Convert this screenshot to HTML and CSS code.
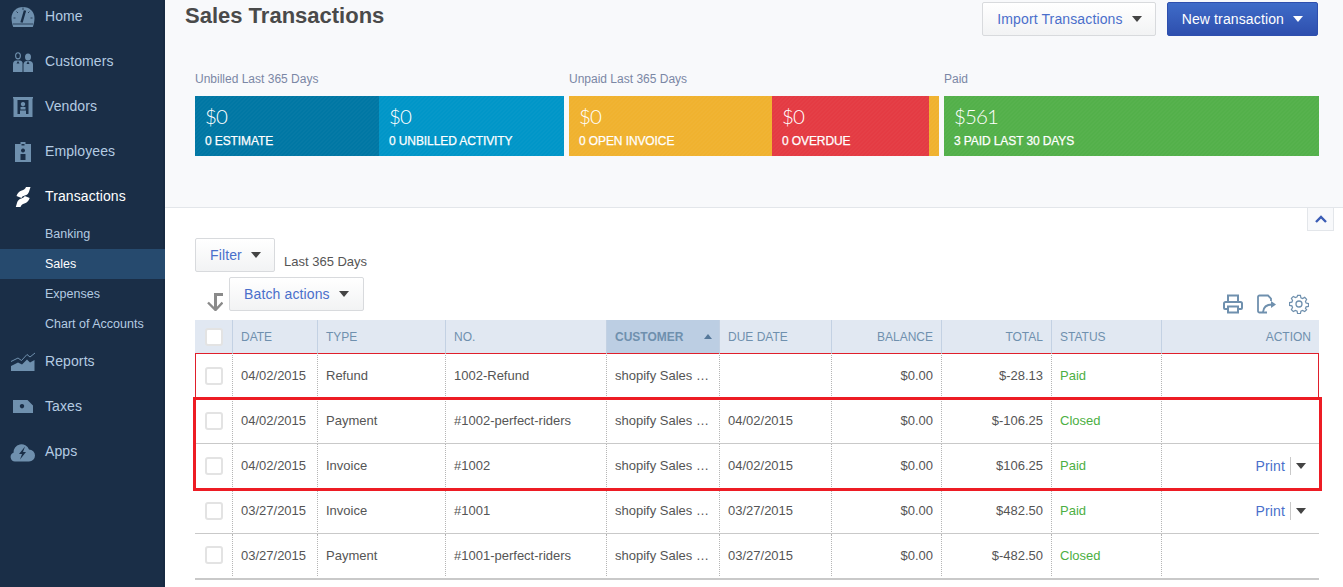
FILE: index.html
```html
<!DOCTYPE html>
<html lang="en">
<head>
<meta charset="utf-8">
<title>Sales Transactions</title>
<link rel="stylesheet" href="styles.css">
</head>
<body>
<div class="app">
  <nav class="side">
    <a class="nav"><svg class="ico" viewBox="0 0 24 20"><path d="M12 0C5.400 0 .5 4.800.5 11c0 3.200.7 6.200 1.700 9h19.600c1-2.800 1.700-5.800 1.700-9C23.500 4.800 18.600 0 12 0z" fill="#6f90ae"/><path d="M14 3.500l-3.500 12" stroke="#1a2e47" stroke-width="2.400"/><path d="M2.500 11h2M19.500 11h2M5.500 4.500L7 6M18.500 4.500L17 6M12 .5v2.500M2 17h20" stroke="#1a2e47" stroke-width=".8"/></svg><span>Home</span></a>
    <a class="nav"><svg class="ico" viewBox="0 0 24 20"><ellipse cx="7" cy="3.800" rx="2.400" ry="3.100" fill="none" stroke="#6f90ae" stroke-width="1.100"/><ellipse cx="17" cy="5" rx="3" ry="3.500" fill="#6f90ae"/><path d="M2 20v-8c0-2 1.500-3.500 3-3.500h4c1.200 0 2 .8 2.500 2V20zM12.500 20v-8c.5-2 1.500-3 3-3h3c2 0 3.500 1.500 3.500 3.500V20z" fill="#6f90ae"/><path d="M7 9l-1.500 2.500h3zM17 9l-1.500 3h3z" fill="#1a2e47"/></svg><span>Customers</span></a>
    <a class="nav"><svg class="ico" viewBox="0 0 24 20"><path fill-rule="evenodd" d="M2 0h20v1.500h-.5V20h-19V1.500H2zM6.500 3v14h2.500v-3.500h6V17h2.500V3zM12 5a2.200 2.200 0 1 0 .01 0zM9.500 10h5v2.500h-5z" fill="#6f90ae"/></svg><span>Vendors</span></a>
    <a class="nav"><svg class="ico" viewBox="0 0 24 20"><path fill-rule="evenodd" d="M4 2h5.500V0h5v2H20v18H4zM10.500 2v1.500h3V2zM12 6.500a2 2 0 1 0 .01 0zM9.500 12v6h5v-6z" fill="#6f90ae"/></svg><span>Employees</span></a>
    <a class="nav on"><svg class="ico" viewBox="0 0 24 20"><path d="M15 0h4.500L18 4.800c-.6 2-2 3.200-4.200 3.800-1.600.5-2.700 1-3.300 2.400L5.500 9C6.500 6 8.200 4.400 10.800 3.500 12.800 2.800 14.400 2 15 0zM9.500 20H4.800l1.400-4.800c.6-2 2-3.200 4.200-3.800 1.600-.5 2.700-1 3.300-2.400l5 2c-1 3-2.700 4.600-5.300 5.500-2 .7-3.300 1.500-3.900 3.500z" fill="#fff"/></svg><span>Transactions</span></a>
    <a class="sub">Banking</a>
    <a class="sub cur">Sales</a>
    <a class="sub">Expenses</a>
    <a class="sub">Chart of Accounts</a>
    <a class="nav"><svg class="ico" viewBox="0 0 24 20"><path d="M0 9.500l7-3.500 3.500 2.500 5.500-6 3 2.500 5-4" fill="none" stroke="#6f90ae" stroke-width="1"/><path d="M0 14l7-3.500 4 2 5-5 3 3 4.500-2.500V19H0z" fill="#6f90ae"/></svg><span>Reports</span></a>
    <a class="nav"><svg class="ico" viewBox="0 0 24 20"><path fill-rule="evenodd" d="M2 3h14.500L22 8.500V16H2zM11 7a2.200 2.200 0 1 0 .01 0z" fill="#6f90ae"/></svg><span>Taxes</span></a>
    <a class="nav"><svg class="ico big" viewBox="0 0 24 20"><path fill-rule="evenodd" d="M4.500 19.500A4.500 4.500 0 0 1 3 10.800 8 8 0 0 1 18.500 7.500a6 6 0 0 1 0 12zM14.500 4.500L8.500 12h3l-2 5.500 6-7.500h-3z" fill="#6f90ae"/></svg><span>Apps</span></a>
  </nav>
  <main class="main">
    <section class="top">
      <header class="head">
        <h1>Sales Transactions</h1>
        <div class="acts">
          <button class="btn imp">Import Transactions<i class="caret"></i></button>
          <button class="btn pri">New transaction<i class="caret w"></i></button>
        </div>
      </header>
      <div class="money">
        <div class="grp g1">
          <div class="lbl">Unbilled Last 365 Days</div>
          <div class="bars">
            <div class="bar teal" style="width:184px"><b>$0</b><span>0 ESTIMATE</span></div>
            <div class="bar blue" style="width:185px"><b>$0</b><span>0 UNBILLED ACTIVITY</span></div>
          </div>
        </div>
        <div class="grp g2">
          <div class="lbl">Unpaid Last 365 Days</div>
          <div class="bars">
            <div class="bar amber" style="width:203px"><b>$0</b><span>0 OPEN INVOICE</span></div>
            <div class="bar red" style="width:157px"><b>$0</b><span>0 OVERDUE</span></div>
            <div class="bar amber sliver" style="width:10px"></div>
          </div>
        </div>
        <div class="grp g3">
          <div class="lbl">Paid</div>
          <div class="bars">
            <div class="bar green" style="width:375px"><b>$561</b><span>3 PAID LAST 30 DAYS</span></div>
          </div>
        </div>
      </div>
    </section>
    <section class="list">
      <button class="collapse"><svg viewBox="0 0 12 8" width="12" height="8"><path d="M1 7l5-5 5 5" fill="none" stroke="#3b5cb5" stroke-width="2.400"/></svg></button>
      <div class="filter">
        <button class="btn sm">Filter<i class="caret"></i></button>
        <span class="range">Last 365 Days</span>
      </div>
      <div class="batch">
        <svg class="turn" viewBox="0 0 16 18" width="16" height="18"><path d="M16 1.500H8.500V16" fill="none" stroke="#8a8a8a" stroke-width="3"/><path d="M1 9.500l7.500 7.500 7-7.500" fill="none" stroke="#8a8a8a" stroke-width="2.400"/></svg>
        <button class="btn sm">Batch actions<i class="caret"></i></button>
        <div class="tools">
          <svg viewBox="0 0 20 20" width="20" height="20"><path d="M5 7.500V1.500h10v6M4.500 15H2a1 1 0 0 1-1-1V9.500A1.500 1.500 0 0 1 2.500 8h15A1.500 1.500 0 0 1 19 9.500V14a1 1 0 0 1-1 1h-2.500M5 12.500h10v6H5z" fill="none" stroke="#6f90ae" stroke-width="2"/></svg>
          <svg viewBox="0 0 20 20" width="20" height="20"><path d="M11 18.500H3.500A1.500 1.500 0 0 1 2 17V3a1.500 1.500 0 0 1 1.500-1.500H12l3 3V7" fill="none" stroke="#6f90ae" stroke-width="1.800"/><path d="M7 18c.5-5 4-7.500 9-7.500" fill="none" stroke="#6f90ae" stroke-width="1.800"/><path d="M15 7l5 3.500-5 3.500z" fill="#6f90ae"/></svg>
          <svg viewBox="0 0 20 20" width="20" height="20"><circle cx="10" cy="10" r="3" fill="none" stroke="#6f90ae" stroke-width="1.300"/><path d="M8.500 1h3l.5 2.500 1.700.7L16 3l2 2-1.200 2.300.7 1.700 2.500.5v3l-2.500.5-.7 1.700L18 16l-2 2-2.300-1.200-1.700.7-.5 2.500h-3L8 17.500l-1.700-.7L4 18l-2-2 1.200-2.300-.7-1.700L0 11.500v-3L2.500 8l.7-1.700L2 4l2-2 2.300 1.200L8 2.500z" transform="translate(.5 .5) scale(.95)" fill="none" stroke="#6f90ae" stroke-width="1.300"/></svg>
        </div>
      </div>
      <div class="table">
        <div class="row th">
          <div class="c c0"><i class="box"></i></div><div class="c c1">DATE</div><div class="c c2">TYPE</div><div class="c c3">NO.</div><div class="c c4 sort">CUSTOMER<i class="up"></i></div><div class="c c5">DUE DATE</div><div class="c c6 r">BALANCE</div><div class="c c7 r">TOTAL</div><div class="c c8">STATUS</div><div class="c c9 r">ACTION</div>
        </div>
        <div class="row first">
          <div class="c c0"><i class="box"></i></div><div class="c c1">04/02/2015</div><div class="c c2">Refund</div><div class="c c3">1002-Refund</div><div class="c c4">shopify Sales …</div><div class="c c5"></div><div class="c c6 r">$0.00</div><div class="c c7 r">$-28.13</div><div class="c c8 ok">Paid</div><div class="c c9 r"></div>
        </div>
        <div class="row">
          <div class="c c0"><i class="box"></i></div><div class="c c1">04/02/2015</div><div class="c c2">Payment</div><div class="c c3">#1002-perfect-riders</div><div class="c c4">shopify Sales …</div><div class="c c5">04/02/2015</div><div class="c c6 r">$0.00</div><div class="c c7 r">$-106.25</div><div class="c c8 ok">Closed</div><div class="c c9 r"></div>
        </div>
        <div class="row">
          <div class="c c0"><i class="box"></i></div><div class="c c1">04/02/2015</div><div class="c c2">Invoice</div><div class="c c3">#1002</div><div class="c c4">shopify Sales …</div><div class="c c5">04/02/2015</div><div class="c c6 r">$0.00</div><div class="c c7 r">$106.25</div><div class="c c8 ok">Paid</div><div class="c c9 r act"><a>Print</a><i class="caret"></i></div>
        </div>
        <div class="row">
          <div class="c c0"><i class="box"></i></div><div class="c c1">03/27/2015</div><div class="c c2">Invoice</div><div class="c c3">#1001</div><div class="c c4">shopify Sales …</div><div class="c c5">03/27/2015</div><div class="c c6 r">$0.00</div><div class="c c7 r">$482.50</div><div class="c c8 ok">Paid</div><div class="c c9 r act"><a>Print</a><i class="caret"></i></div>
        </div>
        <div class="row last">
          <div class="c c0"><i class="box"></i></div><div class="c c1">03/27/2015</div><div class="c c2">Payment</div><div class="c c3">#1001-perfect-riders</div><div class="c c4">shopify Sales …</div><div class="c c5">03/27/2015</div><div class="c c6 r">$0.00</div><div class="c c7 r">$-482.50</div><div class="c c8 ok">Closed</div><div class="c c9 r"></div>
        </div>
        <div class="mark"></div>
      </div>
    </section>
  </main>
</div>
</body>
</html>
```
FILE: styles.css
```css
html, body { margin: 0; padding: 0; height: 100%; overflow: hidden; }
body { font-family: "Liberation Sans", Arial, sans-serif; font-size: 13px; color: #555; background: #fff; }
button { font-family: inherit; cursor: pointer; }
.app { display: flex; height: 587px; overflow: hidden; }

.side { flex: 0 0 165px; width: 165px; background: #1a2e47; box-shadow: inset -2px 0 0 #172a42; }
.nav { display: flex; align-items: center; height: 45px; color: #b4cbe2; font-size: 14px; letter-spacing: .1px; }
.nav:first-child { margin-top: -6px; }
.nav span { margin-bottom: 2px; }
.nav .ico { flex: 0 0 24px; width: 24px; height: 20px; margin: 0 10px 0 11px; overflow: visible; }
.nav .ico.big { width: 27px; flex-basis: 27px; margin: 0 9px 0 9px; }
.nav.on { color: #fff; }
.sub { display: block; height: 30px; line-height: 30px; padding-left: 45px; color: #b4cbe2; font-size: 12.500px; }
.sub.cur { background: #264a6e; color: #fff; position: relative; }

.main { flex: 1; min-width: 0; }
.top { height: 207px; background: #f8f9fb; border-bottom: 1px solid #e3e6ea; padding: 0 25px 0 30px; }
.head { display: flex; justify-content: space-between; height: 72px; margin-left: -10px; }
h1 { margin: 2px 0 0; font-size: 22px; font-weight: 700; line-height: 28px; color: #4a4a4a; }
.acts { display: flex; gap: 11px; margin-top: 2px; height: 34px; }
.btn { height: 34px; padding: 0 14px; border: 1px solid #d8dadd; border-radius: 2px; background: linear-gradient(#fff, #f2f3f4); color: #4a6fcb; font-size: 14px; letter-spacing: .13px; display: inline-flex; align-items: center; white-space: nowrap; }
.btn.imp { padding-right: 13px; }
.btn.pri { background: linear-gradient(#3f6cc8, #2e4fae); border-color: #2e4fae; color: #fff; }
.caret { display: inline-block; flex: none; width: 0; height: 0; border: 5px solid transparent; border-top: 6px solid #444; border-bottom: 0; margin-left: 9px; }
.caret.w { border-top-color: #fff; }

.money { display: flex; gap: 5px; }
.grp { display: flex; flex-direction: column; }
.g1 { width: 369px; }
.g2 { width: 370px; }
.g3 { width: 375px; }
.lbl { height: 24px; line-height: 14px; font-size: 12px; color: #7b87a5; }
.bars { display: flex; height: 60px; }
.bar { flex: none; box-sizing: border-box; padding: 8px 10px 0; color: #fff; display: flex; flex-direction: column; background-image: repeating-linear-gradient(135deg, rgba(255,255,255,.025) 0 1.414px, transparent 1.414px 2.828px); }
.bar.sliver { padding: 0; }
.bar b { font-family: Lato, sans-serif; font-weight: 300; font-size: 20.500px; letter-spacing: -.9px; line-height: 25px; }
.bar span { font-size: 12px; line-height: 20px; margin-top: 2px; white-space: nowrap; letter-spacing: -.1px; -webkit-text-stroke: .25px #fff; }
.teal { background-color: #0077a4; }
.blue { background-color: #0096c8; }
.amber { background-color: #f0b22f; }
.red { background-color: #e43b43; }
.green { background-color: #53b04a; }

.list { position: relative; padding: 30px 24px 0 30px; background: #fff; }
.collapse { position: absolute; right: 9px; top: 0; width: 27px; height: 23px; background: #f8f9fb; border: 1px solid #e3e6ea; border-top: 0; display: flex; align-items: center; justify-content: center; padding: 0; }
.filter { display: flex; align-items: flex-start; height: 34px; }
.filter .btn { width: 80px; padding: 0 14px; }
.range { margin: 17px 0 0 9px; line-height: 14px; color: #555; }
.batch { display: flex; align-items: flex-start; height: 43px; margin-top: 5px; }
.batch .btn { width: 135px; padding: 0 14px; }
.turn { margin: 16px 6px 0 12px; flex: none; }
.tools { margin-left: auto; display: flex; gap: 13px; padding-top: 17px; margin-right: 10px; }

.table { position: relative; width: 1124px; }
.row { display: flex; height: 45px; padding-bottom: 1px; border-bottom: 1px solid #c9c9c9; box-sizing: border-box; }
.c { box-sizing: border-box; display: flex; align-items: center; padding: 0 8px; border-right: 1px dotted #b5b5b5; white-space: nowrap; overflow: hidden; }
.r { justify-content: flex-end; }
.c0 { width: 38px; padding-left: 10px; }
.c1 { width: 85px; }
.c2 { width: 128px; }
.c3 { width: 161px; }
.c4 { width: 113px; }
.c5 { width: 112px; }
.c6 { width: 110px; }
.c7 { width: 110px; }
.c8 { width: 110px; }
.c9 { width: 157px; border-right: 0; }
.box { display: block; box-sizing: border-box; width: 18px; height: 18px; border: 2px solid #e3e3e3; border-radius: 3px; background: #fff; }
.th { height: 33px; padding-bottom: 0; background: #e1e8f2; border-bottom: 0; }
.th .c { border-right: 1px solid #c3d1e3; color: #6f90ae; font-size: 12px; }
.th .c9 { border-right: 0; }
.th .sort { background: #bccee3; font-weight: 700; justify-content: space-between; padding-right: 7px; }
.up { width: 0; height: 0; border: 4.500px solid transparent; border-bottom: 5px solid #55789a; border-top: 0; }
.first { height: 46px; padding-bottom: 1px; border-bottom: 0; box-shadow: inset 0 0 0 1px #e01f2b; }
.last { height: 46px; padding-bottom: 2px; border-bottom: 2px solid #c9c9c9; }
.ok { color: #4caf43; }
.act { padding-right: 13px; }
.act a { color: #4a6fcb; font-size: 14px; letter-spacing: .13px; padding-right: 5px; border-right: 1px solid #c9c9c9; line-height: 18px; }
.act .caret { margin-left: 5px; }
.mark { position: absolute; left: -2px; top: 77px; width: 1129px; height: 94px; box-sizing: border-box; border: 3px solid #ed1c24; pointer-events: none; }
```
